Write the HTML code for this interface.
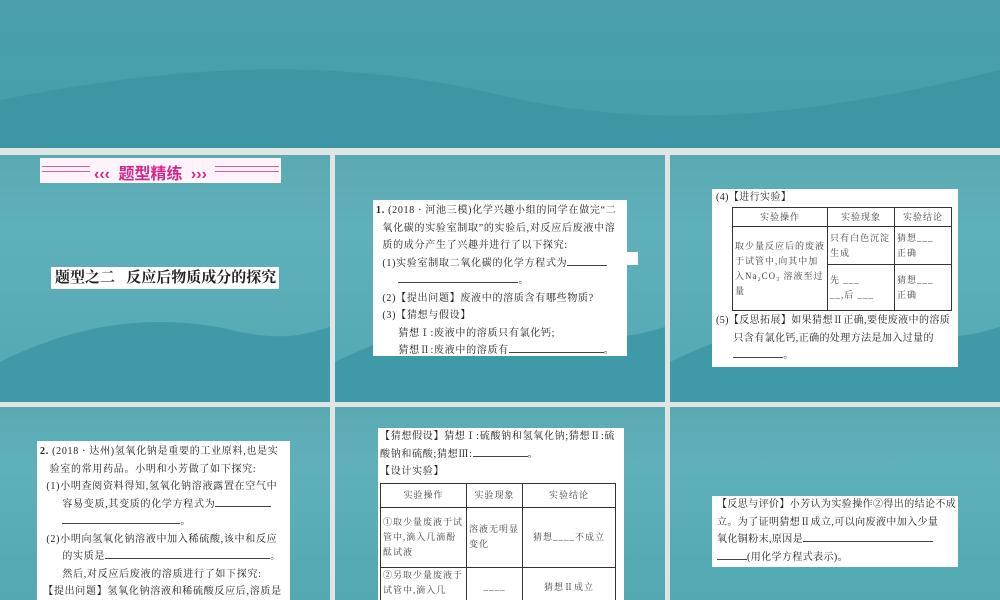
<!DOCTYPE html>
<html><head><meta charset="utf-8"><style>
*{margin:0;padding:0;box-sizing:border-box}
html,body{width:1000px;height:600px;overflow:hidden}
body{background:#dfe5e5;position:relative;font-family:"Liberation Serif","Noto Serif CJK SC",serif;color:#222}
.s{position:absolute;overflow:hidden;background:linear-gradient(180deg,#5aaab4 0%,#5fb0ba 30%,#53a8b2 100%)}
.s svg.w{position:absolute;left:0;bottom:0}
.box{position:absolute;background:#fff;font-size:10px;letter-spacing:.7px;line-height:17.5px;padding:2px 4px;white-space:nowrap;overflow:hidden}
.u{display:inline-block;border-bottom:1px solid #444;height:11px;vertical-align:baseline}
table{border-collapse:collapse;font-size:9px;color:#444;table-layout:fixed;letter-spacing:1px}
td{border:1px solid #333;text-align:center;line-height:15px;padding:0 2px;white-space:normal;overflow:hidden}
</style></head><body>
<div class="s" style="left:0;top:0;width:1000px;height:148px;background:linear-gradient(180deg,#4a9fab,#44a0ac)">
<svg class="w" width="1000" height="148" viewBox="0 0 1000 148"><path d="M0 100 C200 60 350 60 500 95 C650 130 800 120 1000 70 L1000 148 L0 148Z" fill="#3d96a3"/></svg></div>

<div class="s" style="left:0;top:155px;width:330px;height:247px"><svg class="w" width="330" height="100"><path d="M0 60 C80 20 160 10 240 30 C290 40 310 30 330 25 L330 100 L0 100Z" fill="#3f99a6"/></svg></div>
<div class="s" style="left:335px;top:155px;width:330px;height:247px"><svg class="w" width="330" height="100"><path d="M0 60 C80 20 160 10 240 30 C290 40 310 30 330 25 L330 100 L0 100Z" fill="#3f99a6"/></svg></div>
<div class="s" style="left:670px;top:155px;width:330px;height:247px"><svg class="w" width="330" height="100"><path d="M0 60 C80 20 160 10 240 30 C290 40 310 30 330 25 L330 100 L0 100Z" fill="#3f99a6"/></svg></div>
<div class="s" style="left:0;top:407px;width:330px;height:193px"></div>
<div class="s" style="left:335px;top:407px;width:330px;height:193px"></div>
<div class="s" style="left:670px;top:407px;width:330px;height:193px"></div>

<div style="position:absolute;left:40px;top:158px;width:241px;height:25px;background:#fdf3f9">
<div style="position:absolute;left:2px;top:8px;width:48px;border-top:1px solid #e05aa0;border-bottom:1px solid #e05aa0;height:6px"></div>
<div style="position:absolute;left:175px;top:8px;width:64px;border-top:1px solid #e05aa0;border-bottom:1px solid #e05aa0;height:6px"></div>
<div style="position:absolute;left:54px;top:2px;font:bold 16px 'Liberation Sans','Noto Sans CJK SC',sans-serif;color:#d6258a;white-space:nowrap">‹‹‹ <span style="margin:0 4px">题型精练</span> ›››</div>
</div>
<div style="position:absolute;left:51px;top:267px;width:228px;height:22px;background:#fff;font-weight:bold;font-size:15px;line-height:22px;padding-left:4px;color:#222;white-space:nowrap">题型之二&nbsp;&nbsp;&nbsp;反应后物质成分的探究</div>

<div class="box" style="left:373px;top:200px;width:254px;height:156px;padding-left:3px">
<b>1.</b> (2018 · 河池三模)化学兴趣小组的同学在做完“二<br>&nbsp;&nbsp;氧化碳的实验室制取”的实验后,对反应后废液中溶<br>&nbsp;&nbsp;质的成分产生了兴趣并进行了以下探究:<br>&nbsp;&nbsp;(1)实验室制取二氧化碳的化学方程式为<span class="u" style="width:40px"></span><br>&nbsp;&nbsp;&nbsp;&nbsp;&nbsp;&nbsp;&nbsp;<span class="u" style="width:120px"></span>。<br>&nbsp;&nbsp;(2)【提出问题】废液中的溶质含有哪些物质?<br>&nbsp;&nbsp;(3)【猜想与假设】<br>&nbsp;&nbsp;&nbsp;&nbsp;&nbsp;&nbsp;&nbsp;猜想Ⅰ:废液中的溶质只有氯化钙;<br>&nbsp;&nbsp;&nbsp;&nbsp;&nbsp;&nbsp;&nbsp;猜想Ⅱ:废液中的溶质有<span class="u" style="width:95px"></span>。</div>
<div style="position:absolute;left:626px;top:252px;width:12px;height:13px;background:#fff"></div>

<div class="box" style="left:712px;top:189px;width:246px;height:178px;padding:0 4px;letter-spacing:.4px">
<div style="line-height:17px">(4)【进行实验】</div>
<table style="margin-left:16px;width:220px;margin-top:1px">
<tr><td style="width:95px;height:19px">实验操作</td><td style="width:67px">实验现象</td><td>实验结论</td></tr>
<tr><td rowspan="2" style="text-align:left">取少量反应后的废液于试管中,向其中加入Na₂CO₃ 溶液至过量</td><td style="text-align:left;height:38px">只有白色沉淀生成</td><td style="text-align:left">猜想___<br>正确</td></tr>
<tr><td style="text-align:left;height:46px">先 ___<br>__,后 ___</td><td style="text-align:left">猜想___<br>正确</td></tr></table>
<div style="margin-top:1px">(5)【反思拓展】如果猜想Ⅱ正确,要使废液中的溶质<br>&nbsp;&nbsp;&nbsp;&nbsp;&nbsp;&nbsp;只含有氯化钙,正确的处理方法是加入过量的<br>&nbsp;&nbsp;&nbsp;&nbsp;&nbsp;&nbsp;<span class="u" style="width:50px"></span>。</div></div>

<div class="box" style="left:37px;top:441px;width:253px;height:159px;padding-left:3px">
<b>2.</b> (2018 · 达州)氢氧化钠是重要的工业原料,也是实<br>&nbsp;&nbsp;&nbsp;验室的常用药品。小明和小芳做了如下探究:<br>&nbsp;&nbsp;(1)小明查阅资料得知,氢氧化钠溶液露置在空气中<br>&nbsp;&nbsp;&nbsp;&nbsp;&nbsp;&nbsp;&nbsp;容易变质,其变质的化学方程式为<span class="u" style="width:56px"></span><br>&nbsp;&nbsp;&nbsp;&nbsp;&nbsp;&nbsp;&nbsp;<span class="u" style="width:118px"></span>。<br>&nbsp;&nbsp;(2)小明向氢氧化钠溶液中加入稀硫酸,该中和反应<br>&nbsp;&nbsp;&nbsp;&nbsp;&nbsp;&nbsp;&nbsp;的实质是<span class="u" style="width:165px"></span>。<br>&nbsp;&nbsp;&nbsp;&nbsp;&nbsp;&nbsp;&nbsp;然后,对反应后废液的溶质进行了如下探究:<br>&nbsp;【提出问题】氢氧化钠溶液和稀硫酸反应后,溶质是</div>

<div class="box" style="left:378px;top:428px;width:246px;height:172px;padding:0 2px">
<div>【猜想假设】猜想Ⅰ:硫酸钠和氢氧化钠;猜想Ⅱ:硫<br>酸钠和硫酸;猜想Ⅲ:<span class="u" style="width:55px"></span>。<br>【设计实验】</div>
<table style="width:236px;margin-top:2px">
<tr><td style="width:86px;height:24px">实验操作</td><td style="width:56px">实验现象</td><td>实验结论</td></tr>
<tr><td style="text-align:left;height:60px">①取少量废液于试管中,滴入几滴酚酞试液</td><td style="text-align:left">溶液无明显变化</td><td>猜想____不成立</td></tr>
<tr><td style="text-align:left;height:40px;vertical-align:top">②另取少量废液于试管中,滴入几</td><td>____</td><td>猜想Ⅱ成立</td></tr></table></div>

<div class="box" style="left:712px;top:496px;width:246px;height:71px;padding:0 5px;letter-spacing:.4px">【反思与评价】小芳认为实验操作②得出的结论不成<br>立。为了证明猜想Ⅱ成立,可以向废液中加入少量<br>氧化铜粉末,原因是<span class="u" style="width:130px"></span><br><span class="u" style="width:30px"></span>(用化学方程式表示)。</div>
</body></html>
